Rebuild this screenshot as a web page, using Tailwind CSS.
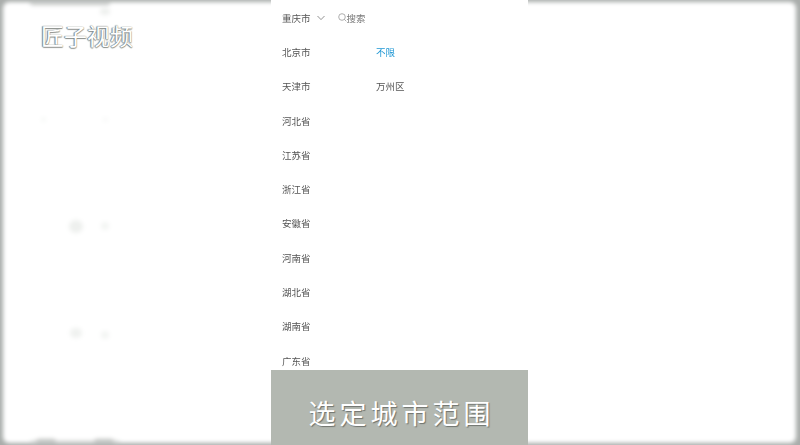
<!DOCTYPE html>
<html lang="zh"><head><meta charset="utf-8"><script src="https://cdn.jsdelivr.net/npm/@tailwindcss/browser@4"></script></head>
<body class="m-0">
<div class="relative w-[800px] h-[445px] overflow-hidden bg-[#a9adab] font-['Noto_Sans_CJK_SC','Liberation_Sans',sans-serif]">
  <!-- blurred backdrop -->
  <div class="absolute inset-0 blur-[2px]">
    <div class="absolute left-[3px] right-[4px] top-[2px] bottom-[2px] bg-white rounded-[6px]"></div>
    <div class="absolute left-[30px] top-0 w-[80px] h-[5px] rounded-full bg-[#c4c7c5]"></div>
    <div class="absolute left-[100px] top-[8px] w-[10px] h-[7px] rounded-full bg-[#eef0ee]"></div>
    <div class="absolute left-[30px] bottom-0 w-[90px] h-[4px] rounded-full bg-[#c8cbc9]"></div>
    <div class="absolute left-[36px] bottom-0 w-[20px] h-[6px] rounded-full bg-[#c0c3c1]"></div>
    <div class="absolute left-[94px] bottom-0 w-[20px] h-[6px] rounded-full bg-[#c0c3c1]"></div>
    <div class="absolute left-[69px] top-[220px] w-[14px] h-[13px] rounded-full bg-[#eef0ee]"></div>
    <div class="absolute left-[101px] top-[222px] w-[8px] h-[8px] rounded-full bg-[#f3f5f3]"></div>
    <div class="absolute left-[70px] top-[328px] w-[12px] h-[10px] rounded-full bg-[#f0f2f0]"></div>
    <div class="absolute left-[101px] top-[331px] w-[8px] h-[8px] rounded-full bg-[#f3f5f3]"></div>
    <div class="absolute left-[41px] top-[117px] w-[5px] h-[5px] rounded-full bg-[#f7f9f7]"></div>
    <div class="absolute left-[103px] top-[117px] w-[5px] h-[5px] rounded-full bg-[#f8f9f8]"></div>
  </div>
  <!-- watermark -->
  <div class="absolute left-[41px] top-[21px] text-[23px] leading-[28px] font-normal text-white [text-shadow:-1px_0_1px_#7d817d,0_1px_1px_#8a8e8a,0_0_1px_#7d817d]">匠子视频</div>
  <!-- panel -->
  <div class="relative ml-[271px] w-[257px] h-full bg-white flex flex-col">
    <div class="flex-1 min-h-0 overflow-hidden pl-[11px] text-[9.5px] leading-[14px] text-[#555] blur-[0.3px]">
      <div class="h-[35px] flex items-center">
        <span>重庆市</span>
        <svg class="ml-[6px]" width="8" height="6" viewBox="0 0 8 6" fill="none" stroke="#777" stroke-width="0.8"><path d="M0.5 1 L4 4.6 L7.5 1"/></svg>
        <svg class="ml-[13px]" width="9" height="9" viewBox="0 0 9 9" fill="none" stroke="#9a9a9a" stroke-width="0.8"><circle cx="4" cy="4" r="3.3"/><path d="M6.4 6.4 L8.3 8.3"/></svg>
        <span class="text-[#777]">搜索</span>
      </div>
      <div class="flex mt-[10px]">
        <div class="w-[94px] flex flex-col gap-[20.3px]">
          <div>北京市</div><div>天津市</div><div>河北省</div><div>江苏省</div><div>浙江省</div><div>安徽省</div><div>河南省</div><div>湖北省</div><div>湖南省</div><div>广东省</div>
        </div>
        <div class="flex flex-col gap-[20.3px]">
          <div class="text-[#1f97d4]">不限</div><div>万州区</div>
        </div>
      </div>
    </div>
    <div class="h-[75px] shrink-0 bg-[#b3b8b1] flex items-center justify-center pt-[12px] pl-[4px] text-[27px] tracking-[4px] text-white [text-shadow:1px_1px_1px_#6f736e]">选定城市范围</div>
  </div>
</div>
</body></html>
